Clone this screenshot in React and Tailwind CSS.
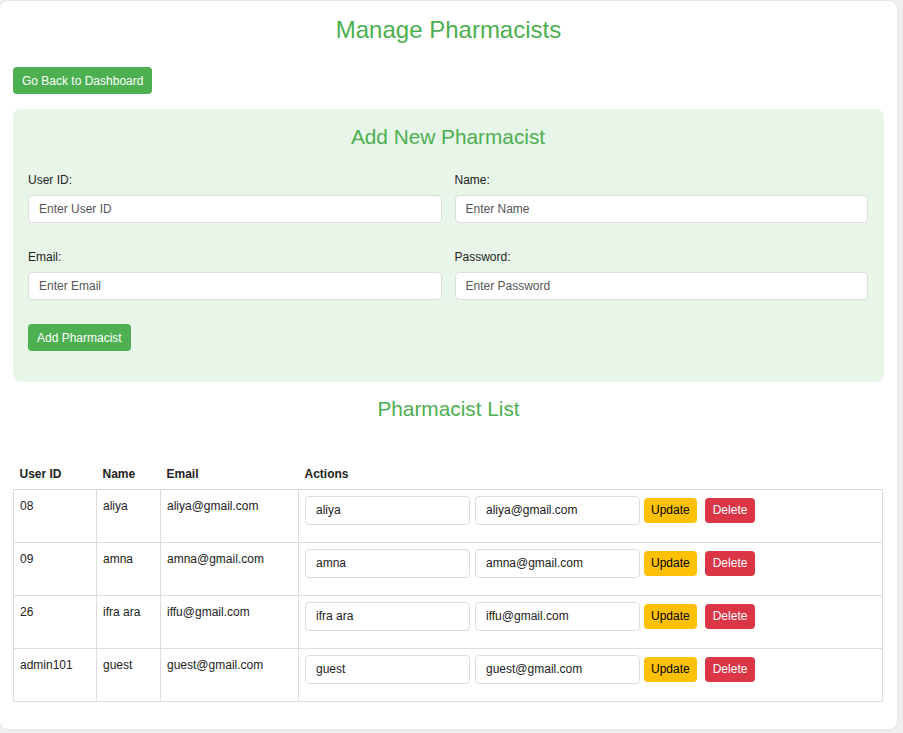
const pharmacists = [
  { id: '08', name: 'aliya', email: 'aliya@gmail.com' },
  { id: '09', name: 'amna', email: 'amna@gmail.com' },
  { id: '26', name: 'ifra ara', email: 'iffu@gmail.com' },
  { id: 'admin101', name: 'guest', email: 'guest@gmail.com' },
];

function Field({ label, placeholder }) {
  return (
    <div className="flex flex-col">
      <label className="text-[12px] leading-[14px] text-[#222] mb-[8px]">{label}</label>
      <input
        placeholder={placeholder}
        className="h-[28px] w-full rounded-[4px] border border-[#ddd] bg-white px-[10px] text-[12px] text-[#333] placeholder:text-[#555] outline-none"
      />
    </div>
  );
}

export default function App() {
  return (
    <div className="min-h-[733px] bg-[#f0f0f0] pt-px font-['Liberation_Sans',Arial,sans-serif]">
      <div className="w-[897px] h-[728px] rounded-lg bg-white shadow-[0_0_4px_rgba(0,0,0,0.08)] px-[13px] pt-[15px]">
        {/* Header */}
        <h2 className="text-center text-[24px] leading-[28px] text-[#4caf50]">Manage Pharmacists</h2>
        <button className="mt-[23px] h-[27px] rounded-[4px] bg-[#4caf50] px-[9px] text-[12px] text-white">
          Go Back to Dashboard
        </button>

        {/* Add form */}
        <div className="mt-[15px] rounded-lg bg-[#e8f5e9] pl-[15px] pr-[16px] pt-[16px] pb-[31px]">
          <h3 className="text-center text-[20.8px] leading-[24px] text-[#4caf50]">Add New Pharmacist</h3>
          <div className="mt-[24px] grid grid-cols-2 gap-x-[13px] gap-y-[27px]">
            <Field label="User ID:" placeholder="Enter User ID" />
            <Field label="Name:" placeholder="Enter Name" />
            <Field label="Email:" placeholder="Enter Email" />
            <Field label="Password:" placeholder="Enter Password" />
          </div>
          <button className="mt-[24px] h-[27px] rounded-[4px] bg-[#4caf50] px-[9px] text-[12px] text-white">
            Add Pharmacist
          </button>
        </div>

        {/* List */}
        <h3 className="mt-[15px] text-center text-[20.8px] leading-[24px] text-[#4caf50]">Pharmacist List</h3>
        <table className="mt-[37px] w-[870px] table-fixed border-collapse text-[12px] text-[#222]">
          <colgroup>
            <col className="w-[83px]" />
            <col className="w-[64px]" />
            <col className="w-[138px]" />
            <col />
          </colgroup>
          <thead>
            <tr className="h-[31px]">
              <th className="px-[6px] pt-[2px] text-left font-bold">User ID</th>
              <th className="px-[6px] pt-[2px] text-left font-bold">Name</th>
              <th className="px-[6px] pt-[2px] text-left font-bold">Email</th>
              <th className="px-[6px] pt-[2px] text-left font-bold">Actions</th>
            </tr>
          </thead>
          <tbody>
            {pharmacists.map((p) => (
              <tr key={p.id} className="h-[53px]">
                <td className="border border-[#ddd] px-[6px] pt-[9px] align-top leading-[14px]">{p.id}</td>
                <td className="border border-[#ddd] px-[6px] pt-[9px] align-top leading-[14px]">{p.name}</td>
                <td className="border border-[#ddd] px-[6px] pt-[9px] align-top leading-[14px]">{p.email}</td>
                <td className="border border-[#ddd] px-[6px] pt-[6px] align-top">
                  <div className="flex items-center">
                    <input
                      defaultValue={p.name}
                      className="h-[29px] w-[165px] rounded-[4px] border border-[#ddd] bg-white px-[10px] text-[12px] text-[#222] outline-none"
                    />
                    <input
                      defaultValue={p.email}
                      className="ml-[5px] h-[29px] w-[165px] rounded-[4px] border border-[#ddd] bg-white px-[10px] text-[12px] text-[#222] outline-none"
                    />
                    <button className="ml-[4px] h-[25px] rounded-[4px] bg-[#ffc107] px-[7px] text-[12px] text-black">
                      Update
                    </button>
                    <button className="ml-[8px] h-[25px] rounded-[4px] bg-[#dc3545] px-[8px] text-[12px] text-white">
                      Delete
                    </button>
                  </div>
                </td>
              </tr>
            ))}
          </tbody>
        </table>
      </div>
    </div>
  );
}
